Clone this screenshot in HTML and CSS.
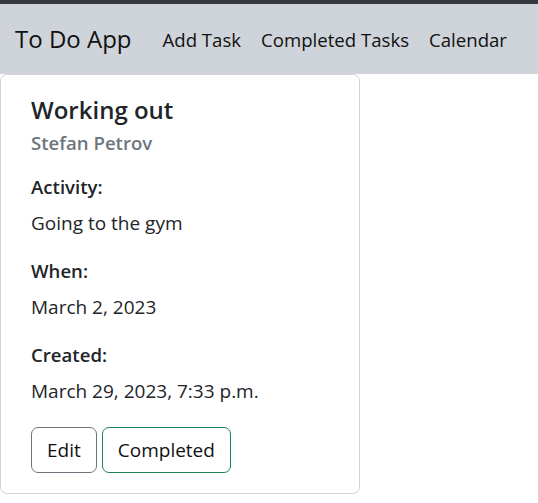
FILE: index.html
```html
<!DOCTYPE html>
<html lang="en">
<head>
<meta charset="utf-8">
<title>To Do App</title>
<link rel="stylesheet" href="styles.css">
</head>
<body>
<div class="topbar"></div>
<nav class="navbar">
  <a class="brand" href="#">To Do App</a>
  <ul class="nav-links">
    <li><a href="#">Add Task</a></li>
    <li><a href="#">Completed Tasks</a></li>
    <li><a href="#">Calendar</a></li>
  </ul>
</nav>
<main class="content">
  <div class="card">
    <h5 class="card-title">Working out</h5>
    <h6 class="card-subtitle">Stefan Petrov</h6>
    <h6 class="label">Activity:</h6>
    <p class="value">Going to the gym</p>
    <h6 class="label">When:</h6>
    <p class="value">March 2, 2023</p>
    <h6 class="label">Created:</h6>
    <p class="value">March 29, 2023, 7:33 p.m.</p>
    <div class="actions">
      <a class="btn btn-edit" href="#">Edit</a>
      <a class="btn btn-done" href="#">Completed</a>
    </div>
  </div>
</main>
</body>
</html>
```

FILE: styles.css
```css
* { box-sizing: border-box; }
html, body { margin: 0; padding: 0; }
body {
  font-family: "Open Sans", "Noto Sans", sans-serif;
  color: #212529;
  background: #fff;
  font-size: 19px;
}
a { text-decoration: none; color: inherit; }
.topbar { height: 4px; background: #35383c; }
.navbar {
  height: 70px;
  background: #cfd4da;
  display: flex;
  align-items: center;
  padding-left: 15px;
}
.brand {
  font-size: 24px;
  color: #111;
  margin-right: 21px;
  padding-bottom: 2px;
}
.nav-links {
  list-style: none;
  margin: 0;
  padding: 0;
  display: flex;
}
.nav-links a {
  display: block;
  padding: 0 10px;
  font-size: 18.6px;
  color: #111;
}
.card {
  width: 360px;
  border: 1px solid #d3d3d3;
  border-radius: 7px;
  padding: 20px 20px 20px 30px;
}
.card-title {
  margin: 0 0 4px 0;
  font-size: 24px;
  font-weight: 600;
  line-height: 29px;
}
.card-subtitle {
  margin: 0 0 15px 0;
  font-size: 18.6px;
  font-weight: 600;
  line-height: 29px;
  color: #6c757d;
}
.label {
  margin: 0 0 8px 0;
  font-size: 18.6px;
  font-weight: 600;
  line-height: 29px;
}
.value {
  margin: 0 0 18px 0;
  font-size: 19px;
  line-height: 29px;
}
.actions {
  display: flex;
  gap: 5px;
  padding-top: 3px;
}
.btn {
  display: inline-block;
  font-size: 19px;
  line-height: 28px;
  padding: 8px 15px;
  border-radius: 7px;
  color: #111;
  border: 1px solid;
}
.btn-edit { border-color: #6c757d; }
.btn-done { border-color: #198754; }
```
